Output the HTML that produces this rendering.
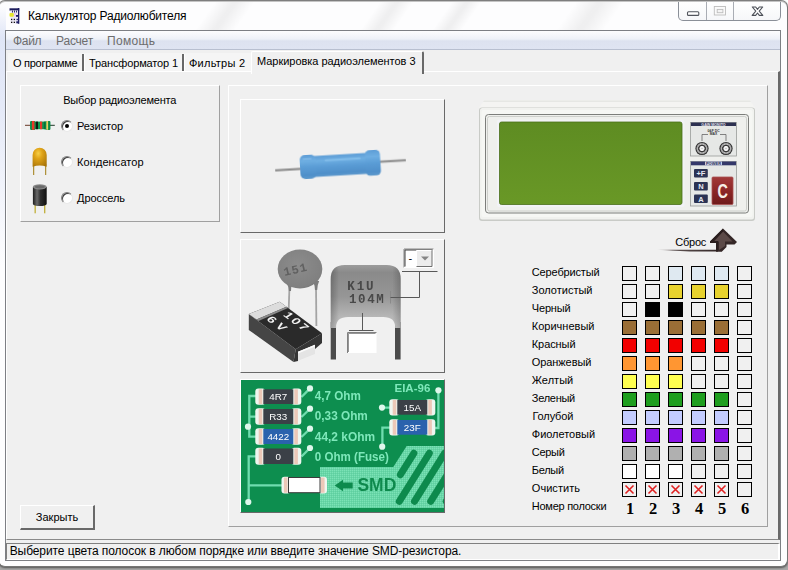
<!DOCTYPE html>
<html lang="ru"><head><meta charset="utf-8"><title>Калькулятор Радиолюбителя</title>
<style>
*{box-sizing:border-box;margin:0;padding:0}
html,body{width:788px;height:570px;overflow:hidden}
body{position:relative;background:#fff;font-family:"Liberation Sans","DejaVu Sans",sans-serif;font-size:11px;color:#000}
.abs{position:absolute}
#shadow{left:-6px;top:540px;width:797px;height:34px;background:#a8a8a8}
#frame{left:-2px;top:0;width:790px;height:567px;border:1px solid #757575;border-top:1px solid #7e7e7e;border-radius:7px;background:#fdfdfe;box-shadow:0 1px 2px rgba(0,0,0,.5),inset 0 1px 0 #c4c4c4}
#title{left:27px;top:8px;font-size:12px;white-space:nowrap;line-height:16px}
#capbtn{left:678px;top:2px;width:103px;height:18.5px;border:1px solid #8a8f98;border-top:none;border-radius:0 0 5px 5px;background:linear-gradient(#fff,#f6f7f9)}
#capbtn i{position:absolute;top:0;width:1px;height:17.5px;background:#a9adb4}
#client{left:5px;top:30px;width:776px;height:531px;border:1px solid #7d7f84;background:#f0f0f0}
#menubar{left:6px;top:31px;width:774px;height:19px;background:linear-gradient(#fdfdfe 0,#eef1f8 45%,#dde2f0 55%,#dfe4f2 100%);border-bottom:1px solid #b8bfd0}
.mi{top:35px;color:#6d6d6d;font-size:12px;white-space:nowrap;line-height:13px}
.tab{top:54px;height:20px;font-size:11px;line-height:19px;white-space:nowrap}
.tsep{top:54px;width:3px;height:17px;border-left:2px solid #686868;border-right:1px solid #fff}
#page{left:6px;top:71px;width:774px;height:469px;background:#f0f0f0;border-top:1px solid #fff;border-left:1px solid #fff;border-right:2px solid #696969;border-bottom:1px solid #8a8a8a}
#acttab{left:251px;top:51px;width:173px;height:23px;background:#f0f0f0;border-left:1px solid #fff;border-top:1px solid #fff;border-right:2px solid #696969;border-radius:2px 2px 0 0}
.raised{background:#f0f0f0;border-top:1px solid #fff;border-left:1px solid #fff;border-right:1px solid #a0a0a0;border-bottom:1px solid #a0a0a0}
.lbl{white-space:nowrap;font-size:11px;line-height:13px}
.sq{width:15px;height:15px;border:1px solid #000;background:#f0f0f0}
#status{left:6px;top:540px;width:774px;height:20px;background:#f0f0f0}
#stin{left:6px;top:543px;width:774px;height:17px;border-top:1px solid #808080;border-left:1px solid #808080;border-bottom:1px solid #fff;border-right:2px solid #fff}
.radio{width:12px;height:12px;border-radius:50%;background:#fff;border:1px solid;border-color:#808080 #e8e8e8 #e8e8e8 #808080;box-shadow:inset 1px 1px 0 #404040}
.radio b{position:absolute;left:3px;top:3px;width:4px;height:4px;border-radius:50%;background:#000}
.num{width:20px;text-align:center;font-family:"Liberation Serif","DejaVu Serif",serif;font-weight:bold;font-size:16.5px;line-height:20px}
#btn{background:#f0f0f0;border-top:1px solid #fff;border-left:1px solid #fff;border-right:2px solid #696969;border-bottom:2px solid #696969;text-align:center;font-size:11px;line-height:22px}
.pnl{background:#f0f0f0;border-top:1px solid #fff;border-left:1px solid #fff;border-right:1px solid #696969;border-bottom:1px solid #696969}
.stk{top:2px;height:28px;transform:skewX(-35deg);background:linear-gradient(90deg,rgba(0,0,0,0),rgba(0,0,0,.055) 45%,rgba(0,0,0,.055) 55%,rgba(0,0,0,0))}
</style></head><body>
<div id="shadow" class="abs"></div>
<div id="frame" class="abs"></div>
<div class="abs stk" style="left:205px;width:40px"></div><div class="abs stk" style="left:370px;width:34px"></div><div class="abs stk" style="left:442px;width:30px"></div><div class="abs stk" style="left:566px;width:48px"></div>
<div id="capbtn" class="abs"><i style="left:27px"></i><i style="left:54px"></i></div>
<div id="title" class="abs" style="letter-spacing:-0.176px;left:28.0px">Калькулятор Радиолюбителя</div>
<div class="abs" style="left:0;top:6px;width:6px;height:260px;background:linear-gradient(180deg,rgba(214,222,244,0),rgba(214,222,244,.75) 12%,rgba(214,222,244,.6) 40%,rgba(214,222,244,0))"></div>
<div id="client" class="abs"></div>
<div id="menubar" class="abs"></div>
<div class="abs mi" style="letter-spacing:-0.304px;left:13.0px">Файл</div>
<div class="abs mi" style="letter-spacing:-0.195px;left:56.0px">Расчет</div>
<div class="abs mi" style="letter-spacing:0.323px;left:107.0px">Помощь</div>
<div id="page" class="abs"></div>
<div class="abs" style="left:8px;top:53px;width:243px;height:18px;background:#f5f5f5"></div>
<div id="acttab" class="abs"></div>
<div class="abs tab" style="letter-spacing:-0.272px;left:13.0px">О программе</div>
<div class="abs tsep" style="left:82px"></div>
<div class="abs tab" style="letter-spacing:-0.131px;left:89.0px">Трансформатор 1</div>
<div class="abs tsep" style="left:182px"></div>
<div class="abs tab" style="letter-spacing:0.250px;left:189.0px">Фильтры 2</div>
<div class="abs tab" style="letter-spacing:-0.034px;left:257.0px;top:52px">Маркировка радиоэлементов 3</div>

<div class="abs raised" id="grp" style="left:20px;top:85px;width:200px;height:137px"></div>
<div class="abs raised" id="big" style="left:228px;top:85px;width:540px;height:442px"></div>
<div class="abs pnl" style="left:240px;top:99px;width:205px;height:134px"></div>
<div class="abs pnl" style="left:240px;top:239px;width:205px;height:134px"></div>
<div class="abs pnl" style="left:240px;top:379px;width:205px;height:134px"></div>
<svg class="abs" id="art" style="left:0;top:0" width="788" height="570" viewBox="0 0 788 570" font-family="Liberation Sans, sans-serif">
<!--DEV-->
<defs>
<linearGradient id="gC" x1="0" y1="0" x2="0" y2="1"><stop offset="0" stop-color="#a23a3a"/><stop offset=".5" stop-color="#8c2626"/><stop offset="1" stop-color="#6e1a1a"/></linearGradient>
<radialGradient id="gBnc"><stop offset="0" stop-color="#aaa"/><stop offset=".15" stop-color="#f0f0f0"/><stop offset=".34" stop-color="#f4f4f4"/><stop offset=".44" stop-color="#333"/><stop offset=".56" stop-color="#484848"/><stop offset=".64" stop-color="#c0c0c0"/><stop offset=".8" stop-color="#909090"/><stop offset=".88" stop-color="#3a3a3a"/><stop offset="1" stop-color="#2a2a2a"/></radialGradient>
<linearGradient id="gLcd" x1="0" y1="0" x2="0" y2="1"><stop offset="0" stop-color="#5e8c22"/><stop offset="1" stop-color="#699826"/></linearGradient>
<linearGradient id="gLine" x1="0" y1="0" x2="1" y2="0"><stop offset="0" stop-color="#3a2c2c" stop-opacity="0"/><stop offset=".25" stop-color="#3a2c2c" stop-opacity=".8"/><stop offset="1" stop-color="#2e2222"/></linearGradient>
</defs>
<!-- device -->
<polygon points="484,100.500 750,100.500 755,108 479,108" fill="#f4f4f2"/>
<polygon points="484,100.500 750,100.500 751,102 483,102" fill="#e6e7e4"/>
<rect x="479" y="107.500" width="276" height="113.500" rx="3" fill="#c9cbc7"/>
<rect x="480" y="108" width="274" height="111.500" rx="2.500" fill="#f1f2ef"/>
<rect x="481.500" y="110" width="271" height="107" rx="2" fill="#f6f7f4"/>
<rect x="485.500" y="114.500" width="263" height="98.500" rx="3" fill="#eff0ed" stroke="#6e716d" stroke-width=".9"/>
<rect x="487.500" y="116.500" width="259" height="94.500" rx="2" fill="none" stroke="#c4c6c2" stroke-width=".8"/>
<rect x="497" y="119.500" width="187.500" height="87.500" rx="2" fill="#f2f3f6"/>
<rect x="499.500" y="122" width="182.500" height="82.500" rx="2" fill="url(#gLcd)" stroke="#4a6e1a" stroke-width=".8"/>
<!-- connector panel -->
<rect x="690.500" y="122.500" width="46" height="33.500" fill="#e6e8e6" stroke="#9a9c9a" stroke-width=".8"/>
<rect x="691" y="122.500" width="45" height="3.500" fill="#2c3050"/>
<text x="713.500" y="125.600" font-size="3.600" font-weight="bold" fill="#e8e8f0" text-anchor="middle">GAIN MONITO</text>
<text x="713.500" y="131.500" font-size="3.400" font-weight="bold" fill="#333" text-anchor="middle">0&amp;F DC</text>
<text x="713.500" y="134.800" font-size="3.400" font-weight="bold" fill="#333" text-anchor="middle">MAX</text>
<path d="M702 141v-6.500h6M726 141v-6.500h-6" fill="none" stroke="#555" stroke-width=".7"/>
<circle cx="702" cy="148.500" r="6.600" fill="url(#gBnc)"/>
<circle cx="726" cy="148.500" r="6.600" fill="url(#gBnc)"/>
<!-- power panel -->
<rect x="690.500" y="161.500" width="46" height="44.500" fill="#e6e8e6" stroke="#9a9c9a" stroke-width=".8"/>
<rect x="691" y="161.500" width="45" height="3.800" fill="#34386a"/>
<rect x="705" y="161.500" width="17" height="3.800" fill="#cfd2e6"/>
<text x="713.500" y="165" font-size="4" font-weight="bold" fill="#2a2e5a" text-anchor="middle">POWER</text>
<rect x="694" y="169" width="13.800" height="8.600" rx="1" fill="#2b3354"/>
<rect x="694" y="182" width="13.800" height="8.600" rx="1" fill="#2b3354"/>
<rect x="694" y="194.500" width="13.800" height="8.600" rx="1" fill="#2b3354"/>
<text x="700.900" y="176.300" font-size="7.500" font-weight="bold" fill="#e6e8f2" text-anchor="middle">+F</text>
<text x="700.900" y="189.300" font-size="7.500" font-weight="bold" fill="#e6e8f2" text-anchor="middle">N</text>
<text x="700.900" y="201.800" font-size="7.500" font-weight="bold" fill="#e6e8f2" text-anchor="middle">A</text>
<rect x="712" y="177" width="21" height="27.500" rx="1" fill="url(#gC)" stroke="#a85050" stroke-width=".8"/>
<text x="722.600" y="198" font-size="20" font-weight="bold" fill="#f6eee6" text-anchor="middle" transform="translate(722.600 0) scale(.72 1) translate(-722.600 0)">C</text>
<!-- Sbros -->
<polygon points="656,249.800 722,249.800 722,251.600 690,251.600" fill="url(#gLine)"/>
<polygon points="723,228.500 737,242 734.500,244.500 726.500,244.500 726.500,247 722,251.600 716,251.600 716,243 710,243 710,241.500" fill="#352727"/>
<polygon points="723,231.500 732.500,241.500 725,241.500 725,246 719,250 719,241.500 714,241.500" fill="#5c4a48"/>
<polygon points="723,228.500 710,241.500 710,243 716,243 716,251.600 718,251.600 718,241 713.500,241 723,231.500" fill="#2a1e1e"/>
<text x="675.300" y="246" font-size="11" fill="#000" letter-spacing="-.25">Сброс</text>
<!--/DEV-->
<!--RES-->
<defs>
<linearGradient id="gRb" x1="0" y1="0" x2="0" y2="1"><stop offset="0" stop-color="#5e9dd6"/><stop offset=".25" stop-color="#6eaee2"/><stop offset=".5" stop-color="#5b9dd6"/><stop offset=".85" stop-color="#4f8fc9"/><stop offset="1" stop-color="#5c98cc"/></linearGradient>
<linearGradient id="gLead" x1="0" y1="0" x2="0" y2="1"><stop offset="0" stop-color="#b4b4b4"/><stop offset=".5" stop-color="#8a8a8a"/><stop offset="1" stop-color="#a8a8a8"/></linearGradient>
<filter id="bl1" x="-10%" y="-10%" width="120%" height="120%"><feGaussianBlur stdDeviation=".5"/></filter>
</defs>
<g transform="rotate(-3.400 340 165)" filter="url(#bl1)">
<rect x="275" y="165.200" width="27" height="2.600" fill="url(#gLead)"/>
<rect x="378" y="162.800" width="28" height="2.600" fill="url(#gLead)"/>
<rect x="312" y="154.500" width="58" height="21" fill="url(#gRb)"/>
<rect x="300" y="153" width="16" height="24" rx="5" fill="url(#gRb)"/>
<rect x="365.500" y="152" width="15" height="25.500" rx="4.500" fill="url(#gRb)"/>
<rect x="325" y="158.500" width="36" height="2" rx="1" fill="#8cc3ee" opacity=".7"/>
<rect x="303" y="156" width="9" height="2" rx="1" fill="#86bcea" opacity=".6"/>
</g>
<!--/RES-->
<!--CAP-->
<defs>
<linearGradient id="gBig" x1="0" y1="0" x2="0" y2="1"><stop offset="0" stop-color="#9c9c9c"/><stop offset=".12" stop-color="#8a8a8a"/><stop offset=".5" stop-color="#969696"/><stop offset=".8" stop-color="#b4b4b4"/><stop offset="1" stop-color="#c6c6c6"/></linearGradient>
<linearGradient id="gBigX" x1="0" y1="0" x2="1" y2="0"><stop offset="0" stop-color="#000" stop-opacity=".22"/><stop offset=".12" stop-color="#000" stop-opacity="0"/><stop offset=".88" stop-color="#000" stop-opacity="0"/><stop offset="1" stop-color="#000" stop-opacity=".18"/></linearGradient>
<linearGradient id="gLeg" x1="0" y1="0" x2="0" y2="1"><stop offset="0" stop-color="#b0b0b0"/><stop offset=".35" stop-color="#6a6a6a"/><stop offset=".6" stop-color="#484848"/><stop offset="1" stop-color="#505050"/></linearGradient>
<radialGradient id="gDisc" cx=".45" cy=".4" r=".7"><stop offset="0" stop-color="#8c8c8c"/><stop offset=".8" stop-color="#808080"/><stop offset="1" stop-color="#6e6e6e"/></radialGradient>
<filter id="bl2" x="-5%" y="-5%" width="110%" height="110%"><feGaussianBlur stdDeviation=".45"/></filter>
</defs>
<g filter="url(#bl2)">
<!-- disc cap legs -->
<path d="M289.500 286L288.600 312" stroke="#a4a4a4" stroke-width="1.800" fill="none"/>
<path d="M316 285L316.400 326" stroke="#a4a4a4" stroke-width="1.800" fill="none"/>
<path d="M286 282q3 5 3 9h2q0-5 2-8zM313 281q2 5 2 9h2.200q0-5 2-9z" fill="#7c7c7c"/>
<ellipse cx="300" cy="269" rx="22.300" ry="19.400" fill="url(#gDisc)"/>
<text x="284.500" y="276" font-family="Liberation Mono, monospace" font-size="12" font-weight="bold" fill="#606060" letter-spacing="1" transform="rotate(-13 284.500 276)">151</text>
<!-- tantalum -->
<polygon points="248.800,314 248.800,330 293.500,362 295.700,349.300" fill="#444"/>
<polygon points="295.700,349.300 322,333.300 322,343 315,349 315,345 298,352 298,361 293.500,362" fill="#363636"/>
<polygon points="298,351.800 315,344.700 315,353.900 298,360.700" fill="#e4e4e4"/>
<polygon points="298,351.800 315,344.700 315,346.500 298,353.600" fill="#fafafa"/>
<polygon points="248.800,314 279.700,301.800 322,333.300 295.700,349.300" fill="#2c2c2c"/>
<polygon points="248.800,314 279.700,301.800 286.500,306.800 256.500,319.500" fill="#dcdcdc"/>
<polygon points="256.500,319.500 286.500,306.800 288,308 258.500,321" fill="#8a8a8a"/>
<g fill="#f2f2f2" font-weight="bold" font-size="13">
<text transform="matrix(.8 .6 -.72 .45 282.400 315.200)" letter-spacing="2.300">107</text>
<text transform="matrix(.8 .6 -.72 .45 265.800 319.500)" letter-spacing="4">6V</text>
</g>
<!-- big cap -->
<rect x="330.700" y="322" width="5.300" height="37.500" fill="#4c4c4c"/>
<rect x="395" y="322" width="5.600" height="37.500" fill="#4c4c4c"/>
<path id="bigcap" d="M330.700 328V279q0-14 14-14h42q14 0 14 14v49h-5.600v-1q0-10-12-10h-35q-12 0-12 10v1z" fill="url(#gBig)"/>
<path d="M330.700 328V279q0-14 14-14h42q14 0 14 14v49h-5.600v-1q0-10-12-10h-35q-12 0-12 10v1z" fill="url(#gBigX)"/>
<g font-family="Liberation Mono, monospace" font-size="12.500" font-weight="bold" fill="#484848">
<text x="347.300" y="290" letter-spacing="1.900">K1U</text>
<text x="349" y="302.500" letter-spacing="1.600">104M</text>
</g>
</g>
<!-- connector lines -->
<path d="M390.500 291v12.500" stroke="#8a8a8a" stroke-width="1" fill="none"/>
<path d="M390.500 297.500H419.500V271.500M402 271.500H437.500M362.500 313V330M349 330.500H373.500" stroke="#585858" stroke-width="1" fill="none"/>
<!-- edit box -->
<rect x="347" y="332" width="29.500" height="21" fill="#fff"/>
<path d="M347.500 353V332.500H376.500" stroke="#808080" fill="none"/>
<path d="M348.500 352V333.500H375.500" stroke="#404040" fill="none" opacity=".55"/>
<!-- combo -->
<rect x="403.500" y="248.500" width="30" height="19" fill="#fff"/>
<path d="M404 267.500V249H433.500" stroke="#808080" fill="none"/>
<path d="M405 266.500V250H432.500" stroke="#404040" fill="none"/>
<path d="M404 267.500H433.500V249.500" stroke="#fff" fill="none"/>
<rect x="416.500" y="250.500" width="15.500" height="16" fill="#ececec"/>
<path d="M416.500 266V250.500H431.500" stroke="#fff" fill="none"/>
<path d="M416.500 266.500H432V250.500" stroke="#707070" fill="none"/>
<polygon points="421,256.500 429,256.500 425,260.500" fill="#858585"/>
<text x="408.500" y="262" font-size="11" fill="#000">-</text>
<!--/CAP-->
<!--PCB-->
<defs>
<clipPath id="cpPcb"><rect x="241" y="380" width="203" height="132"/></clipPath>
<pattern id="dith" width="2" height="2" patternUnits="userSpaceOnUse"><rect width="2" height="2" fill="#68d6a8"/><rect width="1" height="1" fill="#7ce2b6"/><rect x="1" y="1" width="1" height="1" fill="#5ecf9f"/></pattern>
<filter id="bl3" x="-2%" y="-2%" width="104%" height="104%"><feGaussianBlur stdDeviation=".4"/></filter>
</defs>
<g clip-path="url(#cpPcb)"><g filter="url(#bl3)">
<rect x="240" y="379" width="206" height="135" fill="#0f8e50"/>
<polygon points="320,467 393.300,467 406.700,446 446,446 446,508 320,508" fill="url(#dith)"/>
<g stroke="#118a4e" stroke-width="7" stroke-linecap="round" fill="none">
<path d="M400.400 474.700L413.800 453.300"/>
<path d="M399.300 501.300L429.300 453.300"/>
<path d="M414.500 501.300L444.500 453.300"/>
<path d="M430.700 501.300L460.700 453.300"/>
<path d="M446.200 501.300L476 453.300"/>
</g>
<g stroke="#6fdcae" stroke-width="2.300" fill="none">
<path d="M256 396H249.300V436.700H256M249.300 416.700H256"/>
<path d="M256 456.300H248.700V502M248.700 485.300H282"/>
<path d="M301.500 397L310 388.400M301.500 417L310 408.700M301.500 437L310 428.700M301.500 456.500L310 448"/>
<path d="M438.400 390.300V428H434M382 407.600H390M390 427.600H382.400V447"/>
</g>
<circle cx="248" cy="426.7" r="3.1" fill="#dff7ec"/>
<circle cx="248.3" cy="502" r="3.1" fill="#dff7ec"/>
<circle cx="310" cy="388.4" r="3.1" fill="#dff7ec"/>
<circle cx="310" cy="408.7" r="3.1" fill="#dff7ec"/>
<circle cx="310" cy="428.7" r="3.1" fill="#dff7ec"/>
<circle cx="310" cy="448" r="3.1" fill="#dff7ec"/>
<circle cx="438.4" cy="390.3" r="3.1" fill="#dff7ec"/>
<circle cx="382" cy="407.6" r="3.1" fill="#dff7ec"/>
<circle cx="382.2" cy="446.7" r="3.1" fill="#dff7ec"/>
<rect x="255.3" y="388.6" width="10.0" height="16.1" rx="3" fill="#eef6f0"/>
<rect x="291.3" y="388.6" width="10.0" height="16.1" rx="3" fill="#eef6f0"/>
<rect x="258.7" y="389.3" width="3.6" height="14.7" fill="#ecc8b8"/>
<rect x="294.3" y="389.3" width="3.6" height="14.7" fill="#ecc8b8"/>
<rect x="263.3" y="389.3" width="30.0" height="14.7" fill="#3b3f47"/>
<text x="278.3" y="400.1" font-size="9.8" fill="#fff" text-anchor="middle">4R7</text>
<rect x="255.3" y="408.3" width="10.0" height="16.4" rx="3" fill="#eef6f0"/>
<rect x="291.3" y="408.3" width="10.0" height="16.4" rx="3" fill="#eef6f0"/>
<rect x="258.7" y="409.0" width="3.6" height="15.0" fill="#ecc8b8"/>
<rect x="294.3" y="409.0" width="3.6" height="15.0" fill="#ecc8b8"/>
<rect x="263.3" y="409.0" width="30.0" height="15.0" fill="#3b3f47"/>
<text x="278.3" y="420.0" font-size="9.8" fill="#fff" text-anchor="middle">R33</text>
<rect x="255.3" y="428.3" width="10.0" height="16.4" rx="3" fill="#eef6f0"/>
<rect x="291.3" y="428.3" width="10.0" height="16.4" rx="3" fill="#eef6f0"/>
<rect x="258.7" y="429.0" width="3.6" height="15.0" fill="#ecc8b8"/>
<rect x="294.3" y="429.0" width="3.6" height="15.0" fill="#ecc8b8"/>
<rect x="263.3" y="429.0" width="30.0" height="15.0" fill="#2b62ad"/>
<text x="278.3" y="440.0" font-size="9.8" fill="#fff" text-anchor="middle">4422</text>
<rect x="255.3" y="447.8" width="10.0" height="16.9" rx="3" fill="#eef6f0"/>
<rect x="291.3" y="447.8" width="10.0" height="16.9" rx="3" fill="#eef6f0"/>
<rect x="258.7" y="448.5" width="3.6" height="15.5" fill="#ecc8b8"/>
<rect x="294.3" y="448.5" width="3.6" height="15.5" fill="#ecc8b8"/>
<rect x="263.3" y="448.5" width="30.0" height="15.5" fill="#3b3f47"/>
<text x="278.3" y="459.8" font-size="9.8" fill="#fff" text-anchor="middle">0</text>
<rect x="389.3" y="399.3" width="10.0" height="16.1" rx="3" fill="#eef6f0"/>
<rect x="425.3" y="399.3" width="10.0" height="16.1" rx="3" fill="#eef6f0"/>
<rect x="392.7" y="400.0" width="3.6" height="14.7" fill="#ecc8b8"/>
<rect x="428.3" y="400.0" width="3.6" height="14.7" fill="#ecc8b8"/>
<rect x="397.3" y="400.0" width="30.0" height="14.7" fill="#3b3f47"/>
<text x="412.3" y="410.9" font-size="9.8" fill="#fff" text-anchor="middle">15A</text>
<rect x="389.3" y="419.3" width="10.0" height="16.1" rx="3" fill="#eef6f0"/>
<rect x="425.3" y="419.3" width="10.0" height="16.1" rx="3" fill="#eef6f0"/>
<rect x="392.7" y="420.0" width="3.6" height="14.7" fill="#ecc8b8"/>
<rect x="428.3" y="420.0" width="3.6" height="14.7" fill="#ecc8b8"/>
<rect x="397.3" y="420.0" width="30.0" height="14.7" fill="#2b62ad"/>
<text x="412.3" y="430.9" font-size="9.8" fill="#fff" text-anchor="middle">23F</text>
<rect x="281.5" y="476.8" width="9.0" height="16.6" rx="3" fill="#eef6f0"/>
<rect x="318.0" y="476.8" width="9.0" height="16.6" rx="3" fill="#eef6f0"/>
<rect x="283.9" y="477.5" width="3.6" height="15.2" fill="#ecc8b8"/>
<rect x="321.0" y="477.5" width="3.6" height="15.2" fill="#ecc8b8"/>
<rect x="288.5" y="477.5" width="31.5" height="15.2" fill="#fff" stroke="#3a3a3a" stroke-width="1"/>
<g font-weight="bold" font-size="12" fill="#7ee8ba">
<text x="314.800" y="400" textLength="46" lengthAdjust="spacingAndGlyphs">4,7 Ohm</text>
<text x="314.800" y="420.300" textLength="53" lengthAdjust="spacingAndGlyphs">0,33 Ohm</text>
<text x="314.800" y="441" textLength="60.300" lengthAdjust="spacingAndGlyphs">44,2 kOhm</text>
<text x="314.800" y="460.700" textLength="74" lengthAdjust="spacingAndGlyphs">0 Ohm (Fuse)</text>
<text x="394.500" y="391.700" font-size="11.500">EIA-96</text>
</g>
<polygon points="334.700,485.500 343,479.800 343,482.500 352.700,482.500 352.700,488.600 343,488.600 343,491.300" fill="#118a4e"/>
<text x="357.400" y="491.400" font-weight="bold" font-size="17.500" fill="#118a4e">SMD</text>
</g></g>
<!--/PCB-->
<!--CHR-->
<defs>
<radialGradient id="gGold" cx=".4" cy=".3" r=".8"><stop offset="0" stop-color="#f6cf48"/><stop offset=".35" stop-color="#e0a418"/><stop offset="1" stop-color="#a87408"/></radialGradient>
<linearGradient id="gInd" x1="0" y1="0" x2="1" y2="0"><stop offset="0" stop-color="#1c1c1c"/><stop offset=".3" stop-color="#6a6a6a"/><stop offset=".55" stop-color="#2e2e2e"/><stop offset="1" stop-color="#101010"/></linearGradient>
</defs>
<!-- title icon -->
<g>
<rect x="9.500" y="8.300" width="9.700" height="2.300" fill="#1c1c5c"/>
<rect x="17.800" y="8" width="1.500" height="15.800" fill="#1c1c64"/>
<rect x="10.500" y="10.500" width="7.500" height="13" fill="#ece8f4"/>
<rect x="12" y="10.500" width="1" height="2" fill="#33336a"/><rect x="14" y="10.500" width="1" height="2" fill="#33336a"/><rect x="16" y="10.500" width="1" height="2" fill="#33336a"/>
<rect x="9.500" y="13" width="4.300" height="3.800" rx="1" fill="#e6e62c"/>
<rect x="14.200" y="13" width="2" height="3.500" fill="#e8c8f0"/>
<rect x="16" y="15" width="2.200" height="1.800" fill="#1c1c64"/>
<rect x="16.500" y="18.800" width="1.600" height="1.400" fill="#2c2c7c"/>
<rect x="16.300" y="21.300" width="1.800" height="2" fill="#1c1c64"/>
<rect x="11" y="18.800" width="1.300" height="1.300" fill="#111"/><rect x="13.700" y="18.800" width="1.300" height="1.300" fill="#111"/>
<rect x="11" y="21.700" width="1.300" height="1.300" fill="#111"/><rect x="13.700" y="21.700" width="1.300" height="1.300" fill="#111"/>
</g>
<!-- caption glyphs -->
<rect x="687.500" y="11.700" width="11.300" height="3.700" rx="1" fill="#fff" stroke="#50545c" stroke-width="1.100"/>
<rect x="714.300" y="6.500" width="11.200" height="8.500" fill="#fafafa" stroke="#bcbcbc" stroke-width=".9"/>
<rect x="717.200" y="9.400" width="5.700" height="3.300" fill="#f4f4f4" stroke="#bcbcbc" stroke-width=".9"/>
<path d="M752.300 7h3.400l1.800 2.300 1.800-2.300h3.400l-3.500 4.100 3.600 4.300h-3.500l-1.800-2.400-1.800 2.400h-3.500l3.600-4.300z" fill="#fff" stroke="#4c5058" stroke-width="1.100" stroke-linejoin="round"/>
<!-- resistor icon -->
<g>
<rect x="25" y="124.800" width="6" height="1" fill="#6a3a28"/><rect x="49.500" y="124.800" width="5.300" height="1" fill="#203a28"/>
<rect x="30.200" y="121.600" width="20" height="7.600" fill="#0c9a50"/>
<rect x="30.200" y="120.900" width="5" height="9" rx="1" fill="#0c8a48"/><rect x="45.400" y="120.900" width="4.900" height="9" rx="1" fill="#0c8a48"/>
<rect x="31.900" y="121" width="2.500" height="8.800" fill="#e83828"/>
<rect x="35.800" y="121.600" width="2.200" height="7.600" fill="#0a1a10"/>
<rect x="40" y="121.600" width="2.200" height="7.600" fill="#e83828"/>
<rect x="43.800" y="121.600" width="1.600" height="7.600" fill="#087038"/>
<rect x="46.300" y="121" width="1.800" height="8.800" fill="#e8d060"/>
</g>
<!-- capacitor icon -->
<rect x="33.200" y="164" width="1" height="11" fill="#a07c10"/><rect x="45.200" y="164" width="1" height="11" fill="#a07c10"/>
<path d="M32.600 166.700V155a7.050 7.300 0 0 1 14.100 0v11.700q-7-2.500-14.100 0z" fill="url(#gGold)"/>
<!-- inductor icon -->
<rect x="34.600" y="204" width="1.100" height="9.300" fill="#b8a418"/><rect x="44.200" y="204" width="1.100" height="9.300" fill="#b8a418"/>
<path d="M32.900 187v17a6.900 2 0 0 0 13.800 0v-17z" fill="url(#gInd)"/>
<ellipse cx="39.800" cy="186.800" rx="6.900" ry="2.600" fill="#8a8a8a"/>
<ellipse cx="39.800" cy="186.800" rx="5" ry="1.600" fill="#6a6a6a"/>
<!--/CHR-->
<!--ART-->
</svg>


<div class="abs lbl" style="letter-spacing:-0.176px;left:63.2px;top:94px">Выбор радиоэлемента</div>
<div class="abs radio" style="left:61px;top:120px"><b></b></div>
<div class="abs lbl" style="letter-spacing:-0.072px;left:77.0px;top:120px">Резистор</div>
<div class="abs radio" style="left:61px;top:156px"></div>
<div class="abs lbl" style="letter-spacing:0.095px;left:77.0px;top:156px">Конденсатор</div>
<div class="abs radio" style="left:61px;top:192px"></div>
<div class="abs lbl" style="letter-spacing:-0.074px;left:77.0px;top:192px">Дроссель</div>
<div class="abs" id="btn" style="left:20px;top:505px;width:75px;height:25px">Закрыть</div>
<div class="abs lbl" style="letter-spacing:-0.148px;left:531.8px;top:266px">Серебристый</div>
<div class="abs sq" style="left:622px;top:266px;background:#f0f0f0"></div>
<div class="abs sq" style="left:645px;top:266px;background:#f0f0f0"></div>
<div class="abs sq" style="left:668px;top:266px;background:#dfe9f1"></div>
<div class="abs sq" style="left:691px;top:266px;background:#dfe9f1"></div>
<div class="abs sq" style="left:714px;top:266px;background:#dfe9f1"></div>
<div class="abs sq" style="left:737px;top:266px;background:#f0f0f0"></div>
<div class="abs lbl" style="letter-spacing:-0.002px;left:531.8px;top:284px">Золотистый</div>
<div class="abs sq" style="left:622px;top:284px;background:#f0f0f0"></div>
<div class="abs sq" style="left:645px;top:284px;background:#f0f0f0"></div>
<div class="abs sq" style="left:668px;top:284px;background:#e8d22e"></div>
<div class="abs sq" style="left:691px;top:284px;background:#e8d22e"></div>
<div class="abs sq" style="left:714px;top:284px;background:#e8d22e"></div>
<div class="abs sq" style="left:737px;top:284px;background:#f0f0f0"></div>
<div class="abs lbl" style="letter-spacing:-0.167px;left:531.8px;top:302px">Черный</div>
<div class="abs sq" style="left:622px;top:302px;background:#f0f0f0"></div>
<div class="abs sq" style="left:645px;top:302px;background:#000"></div>
<div class="abs sq" style="left:668px;top:302px;background:#000"></div>
<div class="abs sq" style="left:691px;top:302px;background:#f0f0f0"></div>
<div class="abs sq" style="left:714px;top:302px;background:#f0f0f0"></div>
<div class="abs sq" style="left:737px;top:302px;background:#f0f0f0"></div>
<div class="abs lbl" style="letter-spacing:0.009px;left:531.8px;top:320px">Коричневый</div>
<div class="abs sq" style="left:622px;top:320px;background:#9a6e36"></div>
<div class="abs sq" style="left:645px;top:320px;background:#9a6e36"></div>
<div class="abs sq" style="left:668px;top:320px;background:#9a6e36"></div>
<div class="abs sq" style="left:691px;top:320px;background:#9a6e36"></div>
<div class="abs sq" style="left:714px;top:320px;background:#9a6e36"></div>
<div class="abs sq" style="left:737px;top:320px;background:#f0f0f0"></div>
<div class="abs lbl" style="letter-spacing:-0.083px;left:531.8px;top:338px">Красный</div>
<div class="abs sq" style="left:622px;top:338px;background:#f20000"></div>
<div class="abs sq" style="left:645px;top:338px;background:#f20000"></div>
<div class="abs sq" style="left:668px;top:338px;background:#f20000"></div>
<div class="abs sq" style="left:691px;top:338px;background:#f20000"></div>
<div class="abs sq" style="left:714px;top:338px;background:#f20000"></div>
<div class="abs sq" style="left:737px;top:338px;background:#f0f0f0"></div>
<div class="abs lbl" style="letter-spacing:-0.083px;left:531.8px;top:356px">Оранжевый</div>
<div class="abs sq" style="left:622px;top:356px;background:#ff9632"></div>
<div class="abs sq" style="left:645px;top:356px;background:#ff9632"></div>
<div class="abs sq" style="left:668px;top:356px;background:#ff9632"></div>
<div class="abs sq" style="left:691px;top:356px;background:#f0f0f0"></div>
<div class="abs sq" style="left:714px;top:356px;background:#f0f0f0"></div>
<div class="abs sq" style="left:737px;top:356px;background:#f0f0f0"></div>
<div class="abs lbl" style="letter-spacing:0.034px;left:531.8px;top:374px">Желтый</div>
<div class="abs sq" style="left:622px;top:374px;background:#ffff50"></div>
<div class="abs sq" style="left:645px;top:374px;background:#ffff50"></div>
<div class="abs sq" style="left:668px;top:374px;background:#ffff50"></div>
<div class="abs sq" style="left:691px;top:374px;background:#f0f0f0"></div>
<div class="abs sq" style="left:714px;top:374px;background:#f0f0f0"></div>
<div class="abs sq" style="left:737px;top:374px;background:#f0f0f0"></div>
<div class="abs lbl" style="letter-spacing:-0.266px;left:531.8px;top:392px">Зеленый</div>
<div class="abs sq" style="left:622px;top:392px;background:#1e9e1e"></div>
<div class="abs sq" style="left:645px;top:392px;background:#1e9e1e"></div>
<div class="abs sq" style="left:668px;top:392px;background:#1e9e1e"></div>
<div class="abs sq" style="left:691px;top:392px;background:#1e9e1e"></div>
<div class="abs sq" style="left:714px;top:392px;background:#1e9e1e"></div>
<div class="abs sq" style="left:737px;top:392px;background:#f0f0f0"></div>
<div class="abs lbl" style="letter-spacing:-0.129px;left:532.5px;top:410px">Голубой</div>
<div class="abs sq" style="left:622px;top:410px;background:#c3ccff"></div>
<div class="abs sq" style="left:645px;top:410px;background:#c3ccff"></div>
<div class="abs sq" style="left:668px;top:410px;background:#c3ccff"></div>
<div class="abs sq" style="left:691px;top:410px;background:#c3ccff"></div>
<div class="abs sq" style="left:714px;top:410px;background:#c3ccff"></div>
<div class="abs sq" style="left:737px;top:410px;background:#f0f0f0"></div>
<div class="abs lbl" style="letter-spacing:-0.028px;left:531.8px;top:428px">Фиолетовый</div>
<div class="abs sq" style="left:622px;top:428px;background:#8a14e6"></div>
<div class="abs sq" style="left:645px;top:428px;background:#8a14e6"></div>
<div class="abs sq" style="left:668px;top:428px;background:#8a14e6"></div>
<div class="abs sq" style="left:691px;top:428px;background:#8a14e6"></div>
<div class="abs sq" style="left:714px;top:428px;background:#8a14e6"></div>
<div class="abs sq" style="left:737px;top:428px;background:#f0f0f0"></div>
<div class="abs lbl" style="letter-spacing:-0.307px;left:531.8px;top:446px">Серый</div>
<div class="abs sq" style="left:622px;top:446px;background:#b0b0b0"></div>
<div class="abs sq" style="left:645px;top:446px;background:#b0b0b0"></div>
<div class="abs sq" style="left:668px;top:446px;background:#b0b0b0"></div>
<div class="abs sq" style="left:691px;top:446px;background:#b0b0b0"></div>
<div class="abs sq" style="left:714px;top:446px;background:#b0b0b0"></div>
<div class="abs sq" style="left:737px;top:446px;background:#f0f0f0"></div>
<div class="abs lbl" style="letter-spacing:-0.291px;left:531.8px;top:464px">Белый</div>
<div class="abs sq" style="left:622px;top:464px;background:#fff"></div>
<div class="abs sq" style="left:645px;top:464px;background:#fff"></div>
<div class="abs sq" style="left:668px;top:464px;background:#fff"></div>
<div class="abs sq" style="left:691px;top:464px;background:#f0f0f0"></div>
<div class="abs sq" style="left:714px;top:464px;background:#f0f0f0"></div>
<div class="abs sq" style="left:737px;top:464px;background:#f0f0f0"></div>
<div class="abs lbl" style="letter-spacing:0.039px;left:531.8px;top:482px">Очистить</div>
<div class="abs sq" style="left:622px;top:482px;background:#f0f0f0"><svg width="13" height="13" viewBox="0 0 13 13" style="display:block"><path d="M2.5 2.5L10.5 10.5M10.5 2.5L2.5 10.5" stroke="#e02020" stroke-width="1.6" fill="none"/></svg></div>
<div class="abs sq" style="left:645px;top:482px;background:#f0f0f0"><svg width="13" height="13" viewBox="0 0 13 13" style="display:block"><path d="M2.5 2.5L10.5 10.5M10.5 2.5L2.5 10.5" stroke="#e02020" stroke-width="1.6" fill="none"/></svg></div>
<div class="abs sq" style="left:668px;top:482px;background:#f0f0f0"><svg width="13" height="13" viewBox="0 0 13 13" style="display:block"><path d="M2.5 2.5L10.5 10.5M10.5 2.5L2.5 10.5" stroke="#e02020" stroke-width="1.6" fill="none"/></svg></div>
<div class="abs sq" style="left:691px;top:482px;background:#f0f0f0"><svg width="13" height="13" viewBox="0 0 13 13" style="display:block"><path d="M2.5 2.5L10.5 10.5M10.5 2.5L2.5 10.5" stroke="#e02020" stroke-width="1.6" fill="none"/></svg></div>
<div class="abs sq" style="left:714px;top:482px;background:#f0f0f0"><svg width="13" height="13" viewBox="0 0 13 13" style="display:block"><path d="M2.5 2.5L10.5 10.5M10.5 2.5L2.5 10.5" stroke="#e02020" stroke-width="1.6" fill="none"/></svg></div>
<div class="abs sq" style="left:737px;top:482px;background:#f0f0f0"></div>
<div class="abs lbl" style="letter-spacing:-0.260px;left:531.8px;top:500px">Номер полоски</div>
<div class="abs num" style="left:620px;top:499px">1</div>
<div class="abs num" style="left:643px;top:499px">2</div>
<div class="abs num" style="left:666px;top:499px">3</div>
<div class="abs num" style="left:689px;top:499px">4</div>
<div class="abs num" style="left:712px;top:499px">5</div>
<div class="abs num" style="left:735px;top:499px">6</div>
<div class="abs" id="status"></div><div class="abs" id="stin"></div>
<div class="abs lbl" style="letter-spacing:-0.092px;left:9.7px;top:545px;font-size:12px">Выберите цвета полосок в любом порядке или введите значение SMD-резистора.</div>
</body></html>
